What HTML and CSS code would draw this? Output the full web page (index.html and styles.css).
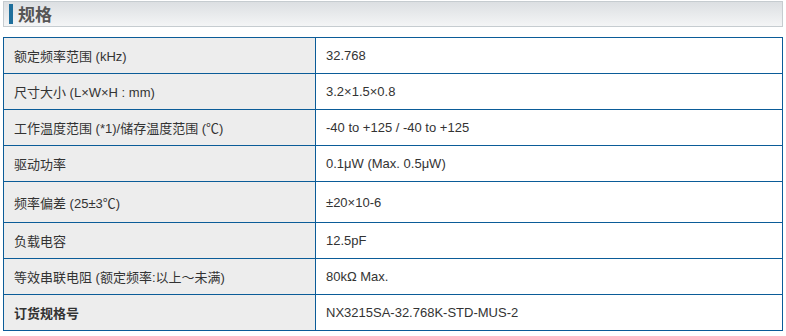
FILE: index.html
```html
<!DOCTYPE html>
<html lang="zh">
<head>
<meta charset="utf-8">
<link rel="stylesheet" href="styles.css">
</head>
<body>
<div class="page">
  <div class="heading"><span class="accent"></span><h2 class="title">规格</h2></div>
  <table class="spec">
    <tr><th>额定频率范围 (kHz)</th><td>32.768</td></tr>
    <tr><th>尺寸大小 (L×W×H : mm)</th><td>3.2×1.5×0.8</td></tr>
    <tr><th>工作温度范围 (*1)/储存温度范围 (℃)</th><td>-40 to +125 / -40 to +125</td></tr>
    <tr><th>驱动功率</th><td>0.1μW (Max. 0.5μW)</td></tr>
    <tr class="tall"><th>频率偏差 (25±3℃)</th><td>±20×10-6</td></tr>
    <tr><th>负载电容</th><td>12.5pF</td></tr>
    <tr><th>等效串联电阻 (额定频率:以上～未满)</th><td>80kΩ Max.</td></tr>
    <tr><th class="strong">订货规格号</th><td>NX3215SA-32.768K-STD-MUS-2</td></tr>
  </table>
</div>
</body>
</html>
```
FILE: styles.css
```css
html, body { margin: 0; padding: 0; background: #fff; }
.page { padding: 1px 3px 0 3px; width: 780px; font-family: "Liberation Sans", Arial, "Noto Sans CJK SC", sans-serif; color: #333; }
.heading {
  display: flex; align-items: center; height: 24px;
  border: 1px solid #c6ccd0;
  background: linear-gradient(#dcdfe2, #f4f5f6);
  padding-left: 5px;
}
.accent { width: 4px; height: 20px; background: #1f6f9c; margin-right: 5px; }
.title { margin: 0; font-size: 17px; font-weight: bold; color: #555; font-family: "Noto Sans CJK SC", sans-serif; line-height: 20px; }
.spec { margin-top: 10px; border-collapse: collapse; width: 780px; font-size: 13px; }
.spec th, .spec td { border: 1px solid #0b5c98; height: 35px; padding: 0 0 0 10px; text-align: left; vertical-align: middle; font-weight: normal; }
.spec th { width: 301px; background: #ededed; }
.spec td { background: #fff; }
.spec tr.tall th, .spec tr.tall td { height: 40px; }
.spec th.strong { font-weight: bold; }
```
